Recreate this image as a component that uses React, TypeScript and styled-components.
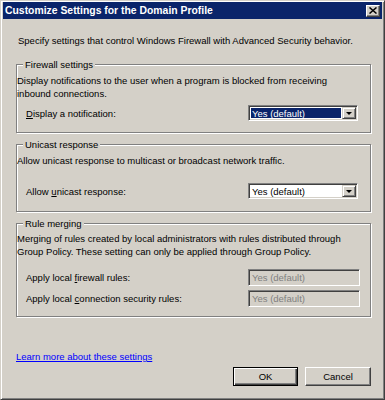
import React from 'react';
import styled, { createGlobalStyle } from 'styled-components';

const face = '#d4d0c8';
const navy = '#0a246a';

const Global = createGlobalStyle`
  body {
    margin: 0;
    background: #fff;
  }
`;

const Window = styled.div`
  width: 385px;
  height: 400px;
  box-sizing: border-box;
  background: ${face};
  border: 1px solid;
  border-color: ${face} #404040 #404040 ${face};
  box-shadow: inset 1px 1px #fff, inset -1px -1px #808080;
  padding: 1px 2px 2px 2px;
  display: flex;
  flex-direction: column;
  font-family: 'Liberation Sans', Arial, sans-serif;
  font-size: 9.5px;
  color: #000;
`;

const TitleBar = styled.div`
  height: 17px;
  background: ${navy};
  display: flex;
  align-items: center;
  justify-content: space-between;
  padding: 0 2px 0 2px;
  flex-shrink: 0;
`;

const Title = styled.span`
  color: #fff;
  font-weight: bold;
  font-size: 10.4px;
  white-space: nowrap;
`;

const CloseBtn = styled.div`
  width: 14px;
  height: 12px;
  box-sizing: border-box;
  background: ${face};
  border: 1px solid;
  border-color: #fff #404040 #404040 #fff;
  box-shadow: inset -1px -1px #808080;
  display: flex;
  align-items: center;
  justify-content: center;
`;

const Content = styled.div`
  flex: 1;
  display: flex;
  flex-direction: column;
  padding: 15px 11px 0 13px;
`;

const Intro = styled.div`
  margin-left: 2px;
  line-height: 13px;
`;

const Group = styled.div<{ $top: number; $pad: string }>`
  position: relative;
  margin-top: ${(p) => p.$top}px;
  border: 1px solid #808080;
  box-shadow: inset 1px 1px #fff, 1px 1px #fff;
  padding: ${(p) => p.$pad};
`;

const Legend = styled.span`
  position: absolute;
  top: -7px;
  left: 6px;
  padding: 0 2px;
  line-height: 13px;
  background: ${face};
`;

const Desc = styled.div`
  line-height: 13px;
  padding-right: 8px;
`;

const Row = styled.div<{ $top: number; $h: number }>`
  display: grid;
  grid-template-columns: 1fr 112px;
  align-items: center;
  height: ${(p) => p.$h}px;
  margin-top: ${(p) => p.$top}px;
  padding: 0 10px 0 9px;
`;

const Label = styled.span`
  white-space: nowrap;
`;

const Sunken = styled.div<{ $w: number; $h: number; $disabled?: boolean }>`
  width: ${(p) => p.$w}px;
  height: ${(p) => p.$h}px;
  box-sizing: border-box;
  border: 1px solid;
  border-color: #808080 #fff #fff #808080;
  box-shadow: inset 1px 1px #404040, inset -1px -1px ${face};
  background: ${(p) => (p.$disabled ? face : '#fff')};
  color: ${(p) => (p.$disabled ? '#808080' : '#000')};
  display: flex;
  padding: 1px;
`;

const Value = styled.div<{ $selected?: boolean }>`
  flex: 1;
  display: flex;
  align-items: center;
  margin: 1px;
  padding-left: 1px;
  background: ${(p) => (p.$selected ? navy : 'transparent')};
  color: ${(p) => (p.$selected ? '#fff' : 'inherit')};
  white-space: nowrap;
`;

const DropBtn = styled.div`
  width: 14px;
  box-sizing: border-box;
  background: ${face};
  border: 1px solid;
  border-color: ${face} #404040 #404040 ${face};
  box-shadow: inset 1px 1px #fff, inset -1px -1px #808080;
  display: flex;
  align-items: center;
  justify-content: center;
  &::after {
    content: '';
    border-left: 3px solid transparent;
    border-right: 3px solid transparent;
    border-top: 3px solid #000;
  }
`;

const Footer = styled.div`
  display: flex;
  flex-direction: column;
  margin-top: 33px;
`;

const HelpLink = styled.a`
  color: #0000ff;
  text-decoration: underline;
  line-height: 13px;
  align-self: flex-start;
  cursor: pointer;
`;

const Buttons = styled.div`
  display: flex;
  justify-content: flex-end;
  gap: 7px;
  margin-top: 4px;
`;

const Button = styled.button<{ $default?: boolean; $w: number }>`
  width: ${(p) => p.$w}px;
  height: 19px;
  box-sizing: border-box;
  padding: 0;
  font: inherit;
  color: #000;
  background: ${face};
  border: 1px solid;
  border-color: ${(p) => (p.$default ? '#000' : '#fff #404040 #404040 #fff')};
  box-shadow: ${(p) =>
    p.$default
      ? 'inset 1px 1px #fff, inset -1px -1px #404040, inset -2px -2px #808080'
      : 'inset -1px -1px #808080'};
`;

const Combo = ({ value, selected }: { value: string; selected?: boolean }) => (
  <Sunken $w={110} $h={16}>
    <Value $selected={selected}>{value}</Value>
    <DropBtn />
  </Sunken>
);

const Disabled = ({ value }: { value: string }) => (
  <Sunken $w={112} $h={17} $disabled>
    <Value>{value}</Value>
  </Sunken>
);

export default function App() {
  return (
    <>
      <Global />
      <Window>
        <TitleBar>
          <Title>Customize Settings for the Domain Profile</Title>
          <CloseBtn>
            <svg width="8" height="7" viewBox="0 0 8 7">
              <path d="M0.5 0.5 L7.5 6.5 M7.5 0.5 L0.5 6.5" stroke="#000" strokeWidth="1.5" />
            </svg>
          </CloseBtn>
        </TitleBar>
        <Content>
          <Intro>Specify settings that control Windows Firewall with Advanced Security behavior.</Intro>

          <Group $top={17} $pad="9px 0 11px 0">
            <Legend>Firewall settings</Legend>
            <Desc>
              Display notifications to the user when a program is blocked from receiving
              <br />
              inbound connections.
            </Desc>
            <Row $top={5} $h={16}>
              <Label>
                <u>D</u>isplay a notification:
              </Label>
              <Combo value="Yes (default)" selected />
            </Row>
          </Group>

          <Group $top={11} $pad="9px 0 12px 0">
            <Legend>Unicast response</Legend>
            <Desc>Allow unicast response to multicast or broadcast network traffic.</Desc>
            <Row $top={16} $h={16}>
              <Label>
                Allow <u>u</u>nicast response:
              </Label>
              <Combo value="Yes (default)" />
            </Row>
          </Group>

          <Group $top={11} $pad="8px 0 9px 0">
            <Legend>Rule merging</Legend>
            <Desc>
              Merging of rules created by local administrators with rules distributed through
              <br />
              Group Policy. These setting can only be applied through Group Policy.
            </Desc>
            <Row $top={11} $h={17}>
              <Label>
                Apply local <u>f</u>irewall rules:
              </Label>
              <Disabled value="Yes (default)" />
            </Row>
            <Row $top={4} $h={17}>
              <Label>
                Apply local <u>c</u>onnection security rules:
              </Label>
              <Disabled value="Yes (default)" />
            </Row>
          </Group>

          <Footer>
            <HelpLink>Learn more about these settings</HelpLink>
            <Buttons>
              <Button $default $w={65}>
                OK
              </Button>
              <Button $w={66}>Cancel</Button>
            </Buttons>
          </Footer>
        </Content>
      </Window>
    </>
  );
}
